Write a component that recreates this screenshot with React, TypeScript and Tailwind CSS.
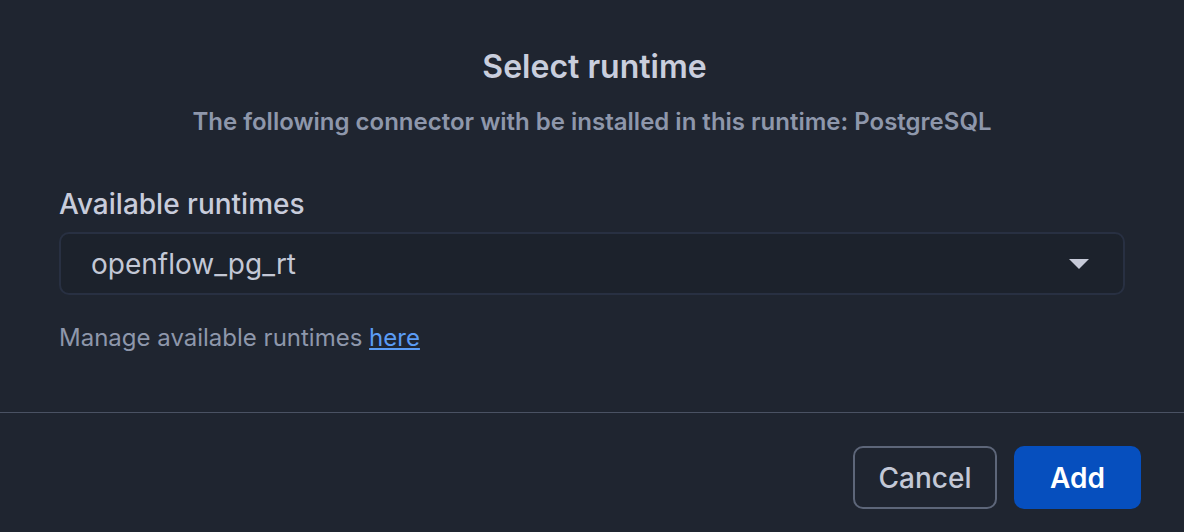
import React from "react";

export default function App() {
  return (
    <div
      className="w-[1184px] h-[532px] bg-[#1f2530] flex flex-col overflow-hidden"
      style={{ fontFamily: "Inter, 'Noto Sans', sans-serif" }}
    >
      <div className="flex flex-col items-center pt-[47px]">
        <h1 className="text-[32px] leading-[40px] font-semibold text-[#c9cedd] pl-[5px]">Select runtime</h1>
        <p className="mt-[21px] text-[24px] leading-[28px] font-semibold text-[#8e97ab]">
          The following connector with be installed in this runtime: PostgreSQL
        </p>
      </div>
      <div className="px-[59px] pt-[50px]">
        <div className="text-[28px] leading-[36px] font-medium text-[#c8ccdb]">Available runtimes</div>
        <div className="mt-[10px] h-[63px] rounded-[10px] border-2 border-[#283042] bg-[#1c222c] flex items-center justify-between pl-[30px] pr-[34px]">
          <span className="text-[28px] text-[#c3c8d6]">openflow_pg_rt</span>
          <svg width="20" height="10" viewBox="0 0 20 10">
            <polygon points="0,0 20,0 10,10" fill="#c6cad8" />
          </svg>
        </div>
        <div className="mt-[27px] text-[24px] leading-[32px] text-[#8e97ab]">
          Manage available runtimes{" "}
          <a className="text-[#5b9cf5] underline underline-offset-2" href="#">here</a>
        </div>
      </div>
      <div className="mt-[58px] border-t border-[#4a5263]" />
      <div className="flex justify-end gap-[17px] pr-[43px] pt-[33px]">
        <button className="w-[144px] h-[63px] rounded-[10px] border-2 border-[#5d6679] text-[28px] font-medium text-[#c3c8d6]">
          Cancel
        </button>
        <button className="w-[127px] h-[63px] rounded-[10px] bg-[#064fbe] text-[28px] font-semibold text-white">
          Add
        </button>
      </div>
    </div>
  );
}
